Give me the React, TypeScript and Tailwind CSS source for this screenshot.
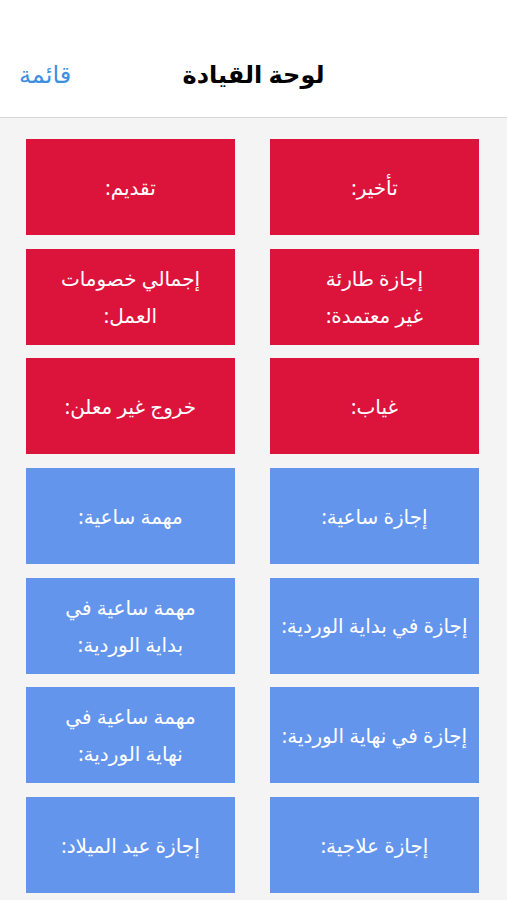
const cards: { text: string[]; color: "red" | "blue" }[] = [
  { text: ["تأخير:"], color: "red" },
  { text: ["تقديم:"], color: "red" },
  { text: ["إجازة طارئة", "غير معتمدة:"], color: "red" },
  { text: ["إجمالي خصومات", "العمل:"], color: "red" },
  { text: ["غياب:"], color: "red" },
  { text: ["خروج غير معلن:"], color: "red" },
  { text: ["إجازة ساعية:"], color: "blue" },
  { text: ["مهمة ساعية:"], color: "blue" },
  { text: ["إجازة في بداية الوردية:"], color: "blue" },
  { text: ["مهمة ساعية في", "بداية الوردية:"], color: "blue" },
  { text: ["إجازة في نهاية الوردية:"], color: "blue" },
  { text: ["مهمة ساعية في", "نهاية الوردية:"], color: "blue" },
  { text: ["إجازة علاجية:"], color: "blue" },
  { text: ["إجازة عيد الميلاد:"], color: "blue" },
];

export default function App() {
  return (
    <div
      dir="rtl"
      className="w-[507px] h-[900px] overflow-hidden bg-[#f4f4f5]"
      style={{ fontFamily: '"Noto Sans", "DejaVu Sans", sans-serif' }}
    >
      {/* Header */}
      <div className="relative h-[118px] bg-white border-b border-[#d8d8d8]">
        <div className="absolute inset-x-0 top-[56px] text-center text-[24px] font-semibold text-black leading-[36px]">
          لوحة القيادة
        </div>
        <button className="absolute left-[19px] top-[56px] text-[24px] leading-[36px] text-[#3d8fe0]">
          قائمة
        </button>
      </div>

      {/* Grid */}
      <div className="grid grid-cols-2 gap-x-[35px] gap-y-[13.7px] pt-[21px] pl-[26px] pr-[28px]">
        {cards.map((c, i) => (
          <div
            key={i}
            className={`h-[96px] flex flex-col items-center justify-center text-white text-[20px] leading-[37px] text-center ${
              c.color === "red" ? "bg-[#dc143c]" : "bg-[#6495ed]"
            }`}
          >
            {c.text.map((t, j) => (
              <span key={j}>{t}</span>
            ))}
          </div>
        ))}
      </div>
    </div>
  );
}
